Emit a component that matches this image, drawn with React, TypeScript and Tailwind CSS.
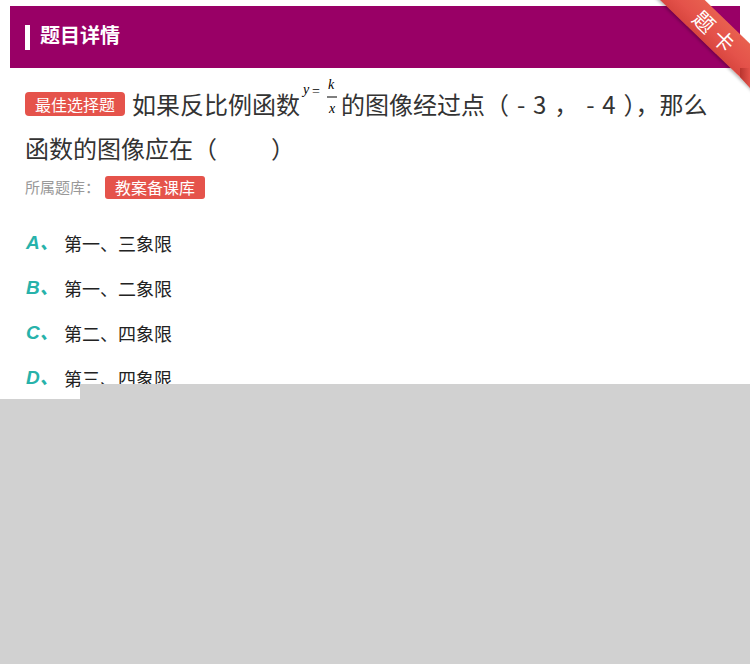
const options = [
  { key: "A", text: "第一、三象限" },
  { key: "B", text: "第一、二象限" },
  { key: "C", text: "第二、四象限" },
  { key: "D", text: "第三、四象限" },
]

// y = k/x, drawn the way the page shows its formula picture
function Formula() {
  return (
    <svg
      width="41"
      height="37"
      viewBox="0 0 41 37"
      className="-mt-[12px] inline-block align-[-1px]"
      fontFamily="'Liberation Serif', serif"
      fontSize="14"
      fontStyle="italic"
      fill="#000"
    >
      <text x="3" y="16">y</text>
      <text x="12" y="18" fontStyle="normal">=</text>
      <text x="28" y="11">k</text>
      <rect x="27" y="18.5" width="10" height="1" />
      <text x="29" y="35">x</text>
    </svg>
  )
}

export default function App() {
  return (
    <div className="relative h-[664px] w-[750px] overflow-hidden bg-white font-['Noto_Sans_CJK_SC','Noto_Sans',sans-serif]">
      {/* Header */}
      <div className="px-[10px] pt-[6px]">
        <div className="flex h-[62px] items-center gap-[10px] bg-[#990066] pl-[15px]">
          <span className="h-[25px] w-[5px] bg-white" />
          <span className="pb-[4px] text-[20px] font-bold text-white">题目详情</span>
        </div>
      </div>

      {/* Ribbon */}
      <div className="absolute left-[640px] top-[16px] flex h-[31px] w-[150px] rotate-[44deg] items-center justify-center bg-[linear-gradient(to_bottom,#e8604f,#e4524a_60%,#d8463f)] text-[21px] tracking-[6px] text-white shadow-[0_2px_3px_rgba(0,0,0,0.25)]">
        <span className="pl-[4px]">题卡</span>
      </div>
      <div className="absolute left-[740px] top-[68px] h-[20px] w-[10px] bg-[linear-gradient(to_right,#b8342e,#e4524a)] [clip-path:polygon(0_0,100%_0,100%_100%,0_45%)]" />

      {/* Question */}
      <div className="px-[25px] pt-[14px]">
        <p className="text-[24px] leading-[44px] text-[#333]">
          <span className="mr-[7px] inline-block h-[24px] rounded-[4px] bg-[#e5534b] px-[10px] align-[3px] text-[16px] leading-[24px] text-white">
            最佳选择题
          </span>
          如果反比例函数
          <Formula />
          的图像经过点
          <span className="[word-spacing:2.5px]">（ - 3 ， - 4 ），</span>
          那么函数的图像应在（
          <span className="inline-block w-[54px]" />
          ）
        </p>
        <div className="mt-[6px] flex items-center gap-[5px]">
          <span className="text-[15px] text-[#999]">所属题库：</span>
          <span className="h-[23px] rounded-[3px] bg-[#e5534b] px-[10px] text-[16px] leading-[23px] text-white">
            教案备课库
          </span>
        </div>
      </div>

      {/* Options */}
      <div className="px-[26px] pt-[22px]">
        {options.map((o) => (
          <div key={o.key} className="flex h-[45px] items-center">
            <span className="w-[38px] font-['Liberation_Sans','Noto_Sans_CJK_SC',sans-serif] text-[19px] font-bold italic text-[#27b2aa]">
              {o.key}、
            </span>
            <span className="text-[18px] text-[#222]">{o.text}</span>
          </div>
        ))}
      </div>

      {/* Gray overlay */}
      <div className="absolute bottom-0 left-[80px] right-0 top-[384px] bg-[#d1d1d1]" />
      <div className="absolute bottom-0 left-0 top-[399px] w-[80px] bg-[#d1d1d1]" />
    </div>
  )
}
